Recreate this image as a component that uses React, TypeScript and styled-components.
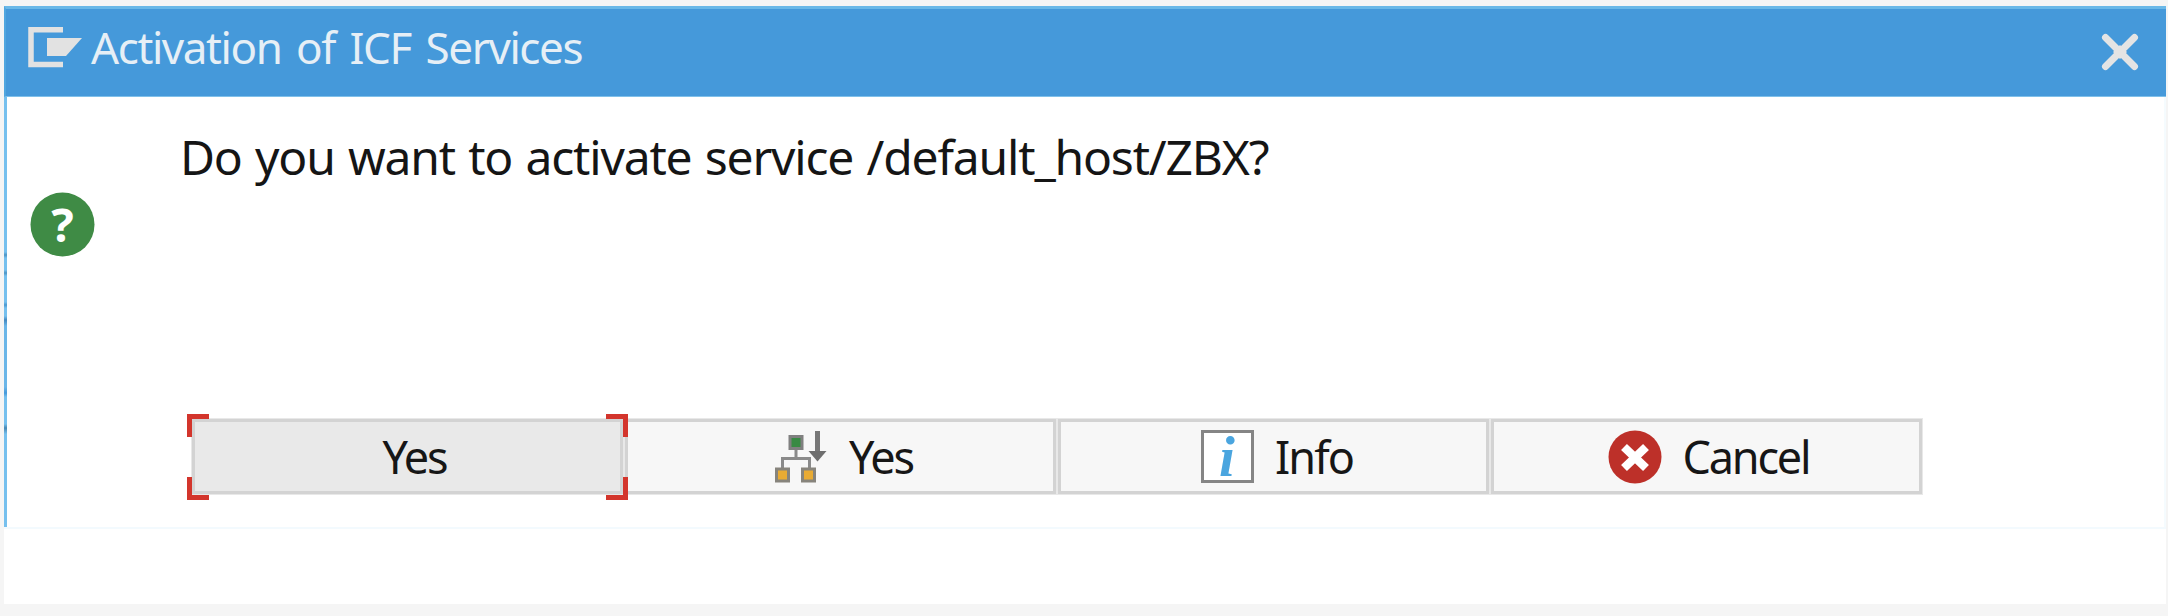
import React from "react";
import styled, { createGlobalStyle } from "styled-components";

const GlobalStyle = createGlobalStyle`
  * { box-sizing: border-box; }
  body {
    margin: 0;
    background: #f5f5f5;
    font-family: "Noto Sans", "Open Sans", sans-serif;
  }
  svg { overflow: visible; }
`;

const Page = styled.div`
  height: 616px;
  padding: 6px 2px 12px 4px;
  background: #f5f5f5;
`;

const Sheet = styled.div`
  height: 598px;
  background: #ffffff;
`;

const Dialog = styled.section`
  height: 523px;
  display: flex;
  flex-direction: column;
  border-bottom: 2px solid #f3fafe;
`;

const TitleBar = styled.header`
  flex: none;
  display: flex;
  align-items: center;
  height: 91px;
  padding: 0 27px 4px 22px;
  border-top: 3px solid #6ab8e8;
  border-left: 2px solid #50a6df;
  border-bottom: 1px solid #7fc0ea;
  background: #4599da;
`;

const TitleIcon = styled.div`
  display: flex;
  padding-bottom: 7px;
`;

const Label = styled.span<{ $size: number; $spacing: number; $word?: number }>`
  font-size: ${(p) => p.$size}px;
  line-height: 60px;
  letter-spacing: ${(p) => p.$spacing}px;
  word-spacing: ${(p) => p.$word ?? 0}px;
  white-space: nowrap;
`;

const Title = styled.h1`
  flex: 1;
  display: flex;
  margin: 0 0 0 8px;
  padding-bottom: 7px;
  font-weight: 400;
  color: #e6eff6;
`;

const CloseButton = styled.button`
  display: flex;
  padding: 0;
  margin-top: 2px;
  border: 0;
  background: none;
`;

const Body = styled.div`
  flex: 1;
  display: flex;
  flex-direction: column;
  padding-left: 3px;
  border-right: 2px solid #f5fbfe;
  background: linear-gradient(
      #76c0ee 0 155px, #4d94c4 158px, #76c0ee 161px 173px, #4d94c4 176px,
      #76c0ee 179px 205px, #4b98cf 208px, #76c0ee 211px 219px, #4389c0 223px,
      #6bb6e8 229px 290px, #4599da 296px, #76c0ee 300px 327px, #4688b4 331px,
      #76c0ee 337px
    )
    left / 3px 100% no-repeat;
`;

const Message = styled.div`
  flex: 1;
  display: flex;
  align-items: flex-start;
`;

const StatusIcon = styled.div`
  display: flex;
  margin: 95px 0 0 23px;
`;

const Question = styled.p`
  display: flex;
  margin: 30px 0 0 85px;
  color: #151515;
`;

const Actions = styled.div`
  display: flex;
  gap: 2px;
  margin: 0 0 33px 185px;
`;

const ActionButton = styled.button<{ $focused?: boolean; $indent: number }>`
  position: relative;
  display: flex;
  align-items: center;
  justify-content: center;
  width: 431px;
  height: 75px;
  padding: 0 0 0 ${(p) => p.$indent}px;
  border: 3px solid #d3d3d3;
  box-shadow: 0 0 0 1px #e8e8e8;
  background: ${(p) => (p.$focused ? "#e9e9e9" : "#f7f7f7")};
  font-family: inherit;
  color: #161616;
`;

const ButtonIcon = styled.span<{ $gap: number }>`
  display: flex;
  margin-right: ${(p) => p.$gap}px;
`;

const FocusFrame = styled.svg`
  position: absolute;
  z-index: 1;
  left: -8px;
  top: -8px;
`;

const MenuIcon = () => (
  <svg width="55" height="41" viewBox="0 0 55 41">
    <path d="M35 2.750H3V37.500H35" fill="none" stroke="#e2e2e2" strokeWidth="5.500" />
    <path d="M19 11H54L38 29H19Z" fill="#e2e2e2" />
  </svg>
);

const CloseIcon = () => (
  <svg width="38" height="38" viewBox="0 0 38 38">
    <path d="M4.500 4.500L33.500 33.500M33.500 4.500L4.500 33.500" stroke="#e4e4e4" strokeWidth="7" strokeLinecap="round" />
    <path d="M19 12L26 19L19 26L12 19Z" fill="#e4e4e4" />
  </svg>
);

const QuestionIcon = () => (
  <svg width="65" height="65" viewBox="0 0 65 65">
    <circle cx="32.500" cy="32.500" r="32" fill="#3f8b45" />
    <text x="32.500" y="50" textAnchor="middle" fontSize="47" fontWeight="700" fill="#ffffff">?</text>
  </svg>
);

const HierarchyIcon = () => (
  <svg width="52" height="53" viewBox="0 0 52 53">
    <g fill="none" stroke="#8a8a8a" strokeWidth="3">
      <path d="M21 20V28M7.500 38V28.500H34.500V38" />
    </g>
    <rect x="15" y="6.500" width="12" height="12" fill="#388a43" stroke="#808080" strokeWidth="3" />
    <rect x="1.500" y="39" width="12" height="12" fill="#e9ab33" stroke="#87847c" strokeWidth="3" />
    <rect x="27.500" y="39" width="12" height="12" fill="#e9ab33" stroke="#87847c" strokeWidth="3" />
    <path d="M42.500 1V22" stroke="#777777" strokeWidth="5" />
    <path d="M33.500 21H51.500L42.500 31.500Z" fill="#6e6e6e" />
  </svg>
);

const InfoIcon = () => (
  <svg width="53" height="53" viewBox="0 0 53 53">
    <rect x="1.500" y="1.500" width="50" height="50" fill="#ffffff" stroke="#858585" strokeWidth="3" />
    <text x="26" y="46" textAnchor="middle" fontFamily="Liberation Serif, serif" fontStyle="italic" fontWeight="700" fontSize="57" fill="#4aa5df">i</text>
  </svg>
);

const CancelIcon = () => (
  <svg width="54" height="54" viewBox="0 0 54 54">
    <circle cx="27" cy="27" r="26.500" fill="#bd3029" />
    <path d="M16 17L38 38M38 17L16 38" stroke="#ffffff" strokeWidth="8.500" />
  </svg>
);

export default function App() {
  return (
    <Page>
      <GlobalStyle />
      <Sheet>
        <Dialog>
          <TitleBar>
            <TitleIcon>
              <MenuIcon />
            </TitleIcon>
            <Title>
              <Label $size={44} $spacing={-1.4} $word={4.5}>Activation of ICF Services</Label>
            </Title>
            <CloseButton aria-label="Close">
              <CloseIcon />
            </CloseButton>
          </TitleBar>
          <Body>
            <Message>
              <StatusIcon>
                <QuestionIcon />
              </StatusIcon>
              <Question>
                <Label $size={48} $spacing={-1.18} $word={2}>Do you want to activate service /default_host/ZBX?</Label>
              </Question>
            </Message>
            <Actions>
              <ActionButton $focused $indent={14}>
                <FocusFrame width="441" height="86" viewBox="0 0 441 86" fill="none" stroke="#d3352c" strokeWidth="5">
                  <path d="M22 2.500H2.500V23M419 2.500H438.500V23M22 83.500H2.500V63M419 83.500H438.500V63" />
                </FocusFrame>
                <Label $size={45} $spacing={-2}>Yes</Label>
              </ActionButton>
              <ActionButton $indent={7}>
                <ButtonIcon $gap={22}>
                  <HierarchyIcon />
                </ButtonIcon>
                <Label $size={45} $spacing={-2}>Yes</Label>
              </ActionButton>
              <ActionButton $indent={7}>
                <ButtonIcon $gap={21}>
                  <InfoIcon />
                </ButtonIcon>
                <Label $size={45} $spacing={-2}>Info</Label>
              </ActionButton>
              <ActionButton $indent={4}>
                <ButtonIcon $gap={21}>
                  <CancelIcon />
                </ButtonIcon>
                <Label $size={45} $spacing={-2.200}>Cancel</Label>
              </ActionButton>
            </Actions>
          </Body>
        </Dialog>
      </Sheet>
    </Page>
  );
}
